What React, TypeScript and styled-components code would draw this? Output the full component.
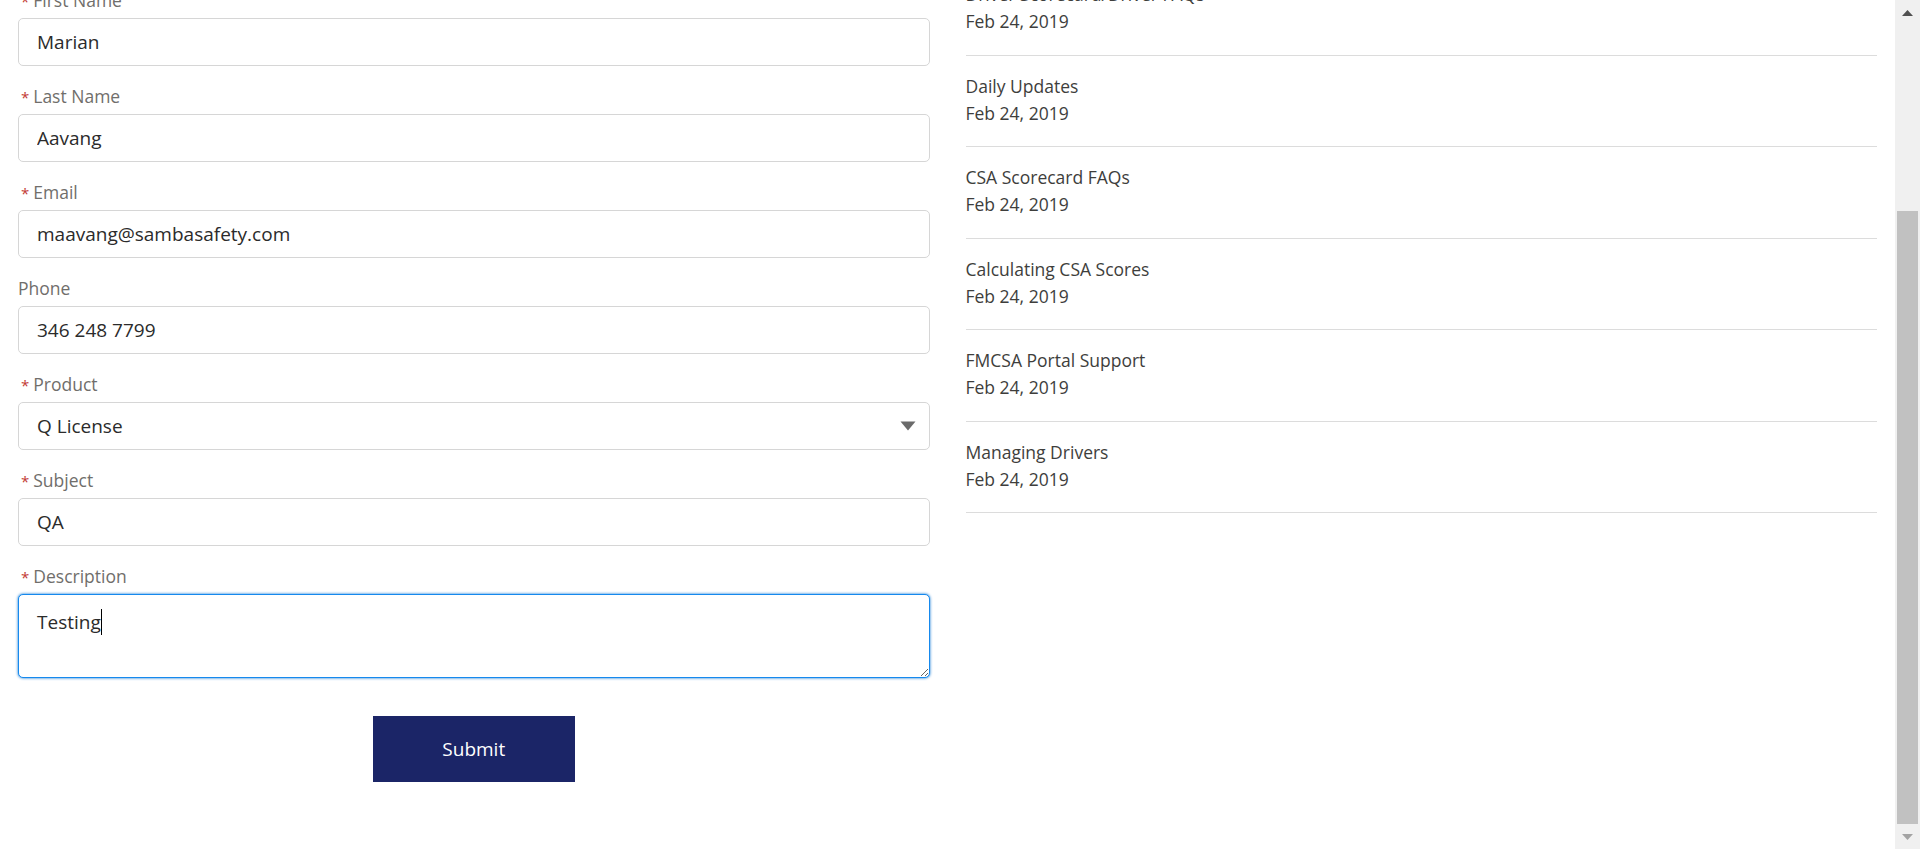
import React from "react";
import styled, { createGlobalStyle } from "styled-components";

const GlobalStyle = createGlobalStyle`
  html, body {
    margin: 0;
    padding: 0;
    background: #ffffff;
    overflow: hidden;
  }
  body {
    font-family: "Open Sans", "Liberation Sans", Arial, sans-serif;
    -webkit-font-smoothing: antialiased;
  }
  * { box-sizing: border-box; }
`;

const Screen = styled.div`
  display: flex;
  height: 849px;
  width: 1920px;
  overflow: hidden;
  background: #ffffff;
`;

const Viewport = styled.div`
  flex: 1;
  min-width: 0;
  overflow: hidden;
`;

const Columns = styled.div`
  display: grid;
  grid-template-columns: 1fr 1fr;
  margin-top: -36px;
`;

const FormColumn = styled.form`
  display: flex;
  flex-direction: column;
  gap: 18px;
  padding: 24px 18px 0;
`;

const Field = styled.div`
  display: flex;
  flex-direction: column;
  gap: 6px;
`;

const Label = styled.label`
  display: block;
  height: 24px;
  font-size: 17.5px;
  line-height: 24px;
  color: #706e6b;
  white-space: nowrap;
`;

const Required = styled.abbr`
  display: inline-block;
  color: #c23934;
  text-decoration: none;
  border: 0;
  font-size: 15px;
  line-height: 0;
  margin: 0 4px 0 3px;
  cursor: help;
`;

const Input = styled.input`
  width: 100%;
  height: 48px;
  border: 1px solid #d6d6d6;
  border-radius: 5px;
  padding: 0 18px;
  font-family: inherit;
  font-size: 19px;
  color: #2b2b2b;
  background: #ffffff;
  outline: none;
`;

const SelectWrap = styled.div`
  position: relative;
`;

const Select = styled.select`
  width: 100%;
  height: 48px;
  border: 1px solid #d6d6d6;
  border-radius: 5px;
  padding: 0 18px;
  font-family: inherit;
  font-size: 19px;
  color: #2b2b2b;
  background: #ffffff;
  outline: none;
  appearance: none;
  -webkit-appearance: none;
`;

const SelectArrow = styled.svg`
  position: absolute;
  right: 14px;
  top: 50%;
  transform: translateY(-50%);
  pointer-events: none;
`;

const TextBox = styled.div`
  height: 84px;
  border: 1px solid #1589ee;
  box-shadow: 0 0 3px #0070d2;
  border-radius: 5px;
  padding: 14px 18px;
  font-size: 19px;
  line-height: 27px;
  color: #2b2b2b;
  resize: vertical;
  overflow: auto;
  background: #ffffff;
`;

const Caret = styled.span`
  display: inline-block;
  width: 1px;
  height: 26px;
  background: #000000;
  vertical-align: -6px;
`;

const SubmitButton = styled.button`
  align-self: center;
  width: 202px;
  height: 66px;
  margin-top: 20px;
  border: none;
  background: #1b2567;
  color: #ffffff;
  font-family: inherit;
  font-size: 19px;
  cursor: pointer;
`;

const ArticleList = styled.ul`
  list-style: none;
  margin: 0;
  padding: 0 18px;
`;

const ArticleItem = styled.li`
  padding: 17px 0 19.5px;
  border-bottom: 1px solid #dcdcdc;
`;

const ArticleText = styled.div`
  font-size: 17.5px;
  line-height: 27px;
  color: #3e3e3c;
`;

const Scrollbar = styled.div`
  width: 25px;
  flex: none;
  display: flex;
  flex-direction: column;
  background: #f0f0f0;
`;

const ScrollArrow = styled.div`
  height: 25px;
  flex: none;
  display: flex;
  align-items: center;
  justify-content: center;
`;

const ScrollTrack = styled.div`
  flex: 1;
  display: flex;
  flex-direction: column;
  padding: 186px 2px 0;
`;

const ScrollThumb = styled.div`
  height: 613px;
  background: #c1c1c1;
`;

type FieldDef = { label: string; required: boolean; value: string };

const textFields: FieldDef[] = [
  { label: "First Name", required: true, value: "Marian" },
  { label: "Last Name", required: true, value: "Aavang" },
  { label: "Email", required: true, value: "maavang@sambasafety.com" },
  { label: "Phone", required: false, value: "346 248 7799" },
];

const articles = [
  "Driver Scorecard/Driver FAQs",
  "Daily Updates",
  "CSA Scorecard FAQs",
  "Calculating CSA Scores",
  "FMCSA Portal Support",
  "Managing Drivers",
];

const FieldLabel: React.FC<{ text: string; required: boolean; htmlFor?: string }> = ({
  text,
  required,
  htmlFor,
}) => (
  <Label htmlFor={htmlFor}>
    {required && <Required title="required">*</Required>}
    {text}
  </Label>
);

export default function App() {
  return (
    <>
      <GlobalStyle />
      <Screen>
        <Viewport>
          <Columns>
            <FormColumn onSubmit={(e) => e.preventDefault()}>
              {textFields.map((f, i) => (
                <Field key={f.label}>
                  <FieldLabel text={f.label} required={f.required} htmlFor={`f${i}`} />
                  <Input id={`f${i}`} defaultValue={f.value} />
                </Field>
              ))}
              <Field>
                <FieldLabel text="Product" required htmlFor="product" />
                <SelectWrap>
                  <Select id="product" defaultValue="Q License">
                    <option>Q License</option>
                  </Select>
                  <SelectArrow width="16" height="10" viewBox="0 0 16 10">
                    <path d="M0.5 0.5 H15.5 L8 9.5 Z" fill="#6b6b6b" />
                  </SelectArrow>
                </SelectWrap>
              </Field>
              <Field>
                <FieldLabel text="Subject" required htmlFor="subject" />
                <Input id="subject" defaultValue="QA" />
              </Field>
              <Field>
                <FieldLabel text="Description" required />
                <TextBox role="textbox" aria-multiline="true">
                  Testing
                  <Caret />
                </TextBox>
              </Field>
              <SubmitButton type="submit">Submit</SubmitButton>
            </FormColumn>
            <ArticleList>
              {articles.map((a) => (
                <ArticleItem key={a}>
                  <ArticleText>{a}</ArticleText>
                  <ArticleText>Feb 24, 2019</ArticleText>
                </ArticleItem>
              ))}
            </ArticleList>
          </Columns>
        </Viewport>
        <Scrollbar>
          <ScrollArrow>
            <svg width="11" height="6" viewBox="0 0 11 6">
              <path d="M0 6 L5.5 0 L11 6 Z" fill="#505050" />
            </svg>
          </ScrollArrow>
          <ScrollTrack>
            <ScrollThumb />
          </ScrollTrack>
          <ScrollArrow>
            <svg width="11" height="6" viewBox="0 0 11 6">
              <path d="M0 0 L11 0 L5.5 6 Z" fill="#a3a3a3" />
            </svg>
          </ScrollArrow>
        </Scrollbar>
      </Screen>
    </>
  );
}
